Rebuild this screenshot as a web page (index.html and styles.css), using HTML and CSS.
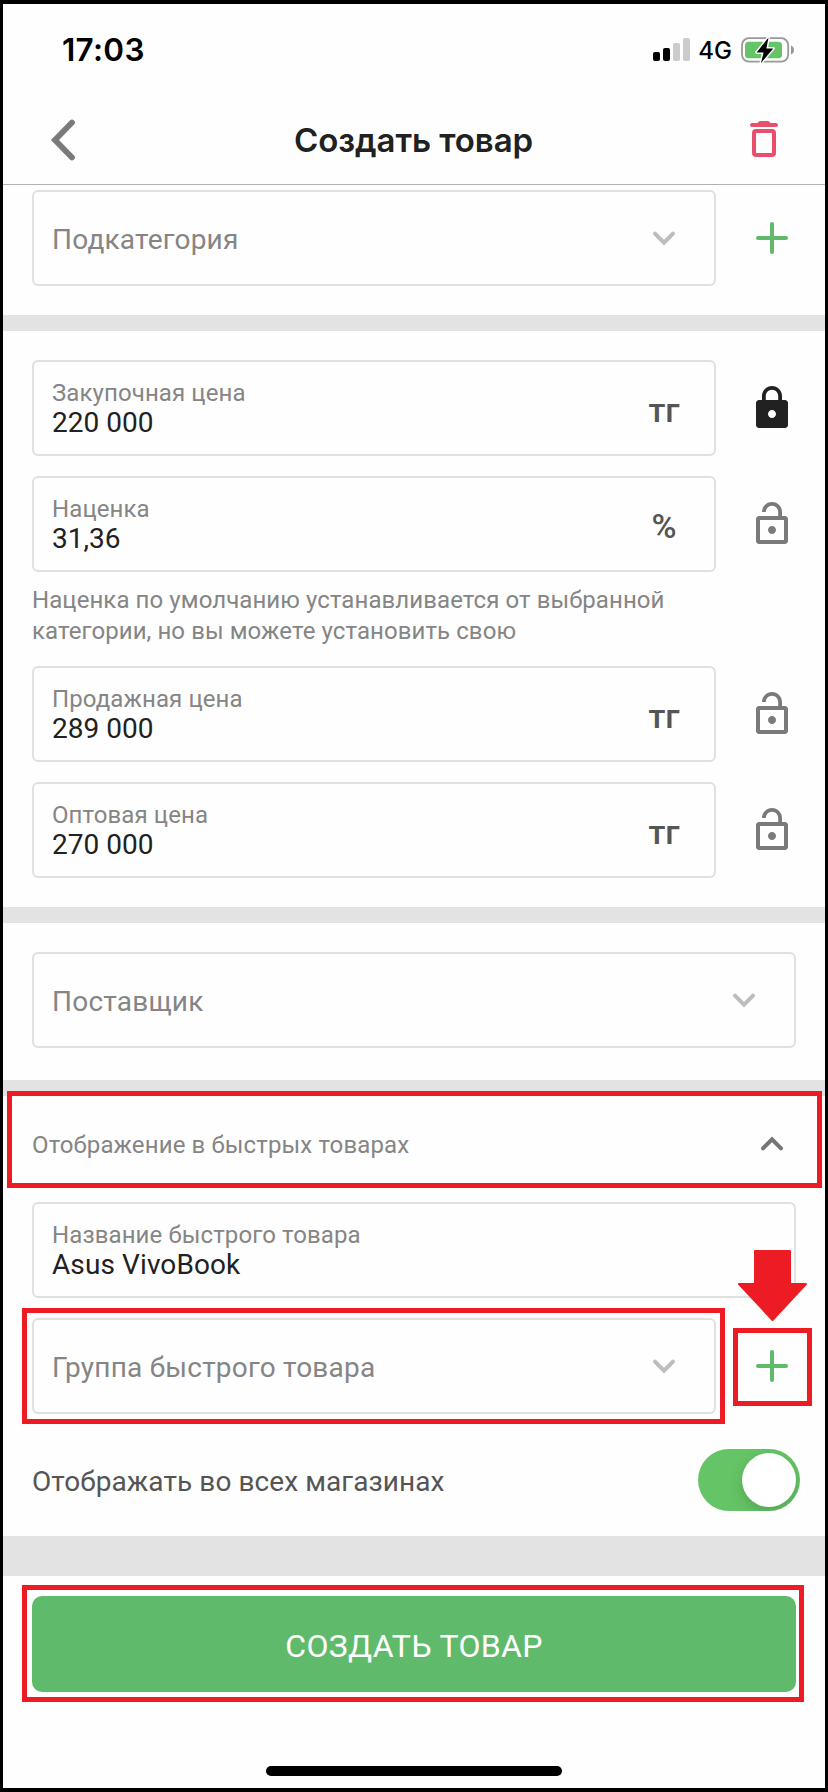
FILE: index.html
```
<!DOCTYPE html>
<html lang="ru">
<head>
<meta charset="utf-8">
<title>Создать товар</title>
<link rel="stylesheet" href="styles.css">
</head>
<body>
<svg width="0" height="0" class="defs">
  <symbol id="chevron" viewBox="0 0 24 24"><path d="M3 7.700l9 9 9-9" fill="none" stroke="currentColor" stroke-width="4" stroke-linecap="round"/></symbol>
  <symbol id="plus" viewBox="0 0 48 48"><path d="M24 10v28M10 24h28" fill="none" stroke="currentColor" stroke-width="4" stroke-linecap="round"/></symbol>
  <symbol id="lock" viewBox="0 0 24 24"><path fill="currentColor" d="M18.500 8H17V6c0-2.760-2.240-5-5-5S7 3.240 7 6v2H5.500C4.700 8 4 8.700 4 9.500v11c0 .8.700 1.500 1.500 1.500h13c.8 0 1.500-.7 1.500-1.500v-11c0-.8-.7-1.500-1.500-1.500zM12 17c-1.100 0-2-.9-2-2s.9-2 2-2 2 .9 2 2-.9 2-2 2zm3.100-9H8.900V6c0-1.710 1.390-3.100 3.100-3.100s3.100 1.390 3.100 3.100v2z"/></symbol>
  <symbol id="unlock" viewBox="0 0 24 24"><path fill="currentColor" fill-rule="evenodd" d="M12 17c1.100 0 2-.9 2-2s-.9-2-2-2-2 .9-2 2 .9 2 2 2zM18.500 8H17V6c0-2.760-2.240-5-5-5S7 3.240 7 6h1.900c0-1.710 1.390-3.100 3.100-3.100s3.100 1.390 3.100 3.100v2H5.500C4.700 8 4 8.700 4 9.500v11c0 .8.700 1.500 1.500 1.500h13c.8 0 1.500-.7 1.500-1.500v-11c0-.8-.7-1.500-1.500-1.500zM18 20H6V10h12v10z"/></symbol>
</svg>

<div class="screen">
  <div class="status-bar">
    <span class="clock">17:03</span>
    <div class="status-icons">
      <svg class="signal" width="37" height="23" viewBox="0 0 37 23">
        <rect x="0" y="14" width="7" height="9" rx="2"/>
        <rect x="10" y="10" width="7" height="13" rx="2"/>
        <rect x="20" y="5" width="7" height="18" rx="2" fill="#ccc"/>
        <rect x="30" y="0" width="7" height="23" rx="2" fill="#ccc"/>
      </svg>
      <span class="network">4G</span>
      <svg class="battery" width="54" height="28" viewBox="0 0 54 28">
        <rect x="1" y="2.200" width="46.200" height="23.400" rx="7" fill="none" stroke="#999" stroke-width="1.800"/>
        <rect x="4" y="5.700" width="37" height="16.500" rx="3.500" fill="#65c466"/>
        <path d="M50 9.400c1.900.7 3 2.400 3 4.500s-1.100 3.800-3 4.500z" fill="#999"/>
        <path d="M27.500 1.400L15.700 16.400h6.900L20 27 32.300 12.400h-6.900z" fill="#000" stroke="#fff" stroke-width="3" stroke-linejoin="round" paint-order="stroke"/>
      </svg>
    </div>
  </div>

  <header class="nav">
    <svg class="back" width="32" height="48" viewBox="0 0 32 48"><path d="M25 6.500L8 24l17 17.500" fill="none" stroke="currentColor" stroke-width="5.800" stroke-linecap="round"/></svg>
    <h1 class="nav-title">Создать товар</h1>
    <svg class="trash" width="32" height="40" viewBox="0 0 32 40">
      <path fill="currentColor" d="M4 4h5.500c1-1.500 2-2 3.500-2h6c1.500 0 2.500.5 3.500 2H28c2.600 0 2.600 4 0 4H4c-2.600 0-2.600-4 0-4z"/>
      <rect x="6" y="12" width="20" height="24" rx="2" fill="none" stroke="currentColor" stroke-width="4"/>
    </svg>
  </header>

  <section class="section section-category">
    <div class="row">
      <div class="field"><span class="placeholder">Подкатегория</span><span class="trail"><svg class="icon-sm"><use href="#chevron"/></svg></span></div>
      <svg class="icon green"><use href="#plus"/></svg>
    </div>
  </section>
  <div class="divider"></div>

  <section class="section section-prices">
    <div class="row">
      <div class="field"><div class="entry"><span class="label">Закупочная цена</span><span class="value">220 000</span></div><span class="trail unit">тг</span></div>
      <svg class="icon dark"><use href="#lock"/></svg>
    </div>
    <div class="row">
      <div class="field"><div class="entry"><span class="label">Наценка</span><span class="value">31,36</span></div><span class="trail unit">%</span></div>
      <svg class="icon"><use href="#unlock"/></svg>
    </div>
    <p class="hint">Наценка по умолчанию устанавливается от выбранной<br>категории, но вы можете установить свою</p>
    <div class="row">
      <div class="field"><div class="entry"><span class="label">Продажная цена</span><span class="value">289 000</span></div><span class="trail unit">тг</span></div>
      <svg class="icon"><use href="#unlock"/></svg>
    </div>
    <div class="row">
      <div class="field"><div class="entry"><span class="label">Оптовая цена</span><span class="value">270 000</span></div><span class="trail unit">тг</span></div>
      <svg class="icon"><use href="#unlock"/></svg>
    </div>
  </section>
  <div class="divider"></div>

  <section class="section section-supplier">
    <div class="field"><span class="placeholder">Поставщик</span><span class="trail"><svg class="icon-sm"><use href="#chevron"/></svg></span></div>
  </section>
  <div class="divider"></div>

  <section class="section section-quick">
    <div class="quick-head marked mark-head">
      <span class="quick-title">Отображение в быстрых товарах</span>
      <span class="head-icon"><svg class="icon-sm flip"><use href="#chevron"/></svg></span>
    </div>
    <div class="field"><div class="entry"><span class="label">Название быстрого товара</span><span class="value latin">Asus VivoBook</span></div></div>
    <div class="row">
      <div class="field marked mark-field"><span class="placeholder">Группа быстрого товара</span><span class="trail"><svg class="icon-sm"><use href="#chevron"/></svg></span></div>
      <div class="add marked mark-add">
        <svg class="icon green"><use href="#plus"/></svg>
        <svg class="arrow" width="70" height="72" viewBox="0 0 70 72"><path d="M17 1h35v33h16L34.500 70 1 34h16z" fill="#ed1c24" stroke="#ed1c24" stroke-width="2" stroke-linejoin="round"/></svg>
      </div>
    </div>
    <div class="switch-row">
      <span class="switch-label">Отображать во всех магазинах</span>
      <span class="switch"><span class="knob"></span></span>
    </div>
  </section>
  <div class="divider divider-tall"></div>

  <footer class="section footer">
    <div class="submit marked mark-submit">СОЗДАТЬ ТОВАР</div>
    <div class="home-indicator"></div>
  </footer>
</div>
</body>
</html>
```
FILE: styles.css
```
* { box-sizing: border-box; }
body { margin: 0; background: #fff; font-family: Roboto, "Noto Sans", sans-serif; }
svg { display: block; flex: none; }
.defs { position: absolute; }

.screen {
  display: flex;
  flex-direction: column;
  width: 828px;
  height: 1792px;
  border: solid #000;
  border-width: 4px 3px;
  background: #fefefe;
  overflow: hidden;
}

/* status bar */
.status-bar {
  display: flex;
  align-items: center;
  justify-content: space-between;
  height: 92px;
  padding: 0 30px 0 59px;
  font-family: Inter, sans-serif;
  color: #000;
}
.clock { padding-bottom: 2px; font-size: 31.500px; font-weight: 600; letter-spacing: .3px; }
.status-icons { display: flex; align-items: center; }
.signal { margin-bottom: 1px; }
.network { margin: 1px 9px 0 8px; font-size: 24px; font-weight: 500; }

/* navigation */
.nav {
  display: flex;
  align-items: center;
  justify-content: space-between;
  height: 89px;
  padding: 0 45px 0 44px;
  border-bottom: 1px solid #b2b2b2;
}
.nav-title {
  margin: 0;
  font: 600 33px Inter, sans-serif;
  letter-spacing: -.07px;
  color: #212121;
}
.back { margin-bottom: 1px; color: #7a7a7a; }
.trash { margin-bottom: 2px; color: #e84f6c; }

/* layout */
.section { display: flex; flex-direction: column; padding: 29px; }
.section-category { padding-top: 5px; }
.section-prices, .section-quick { gap: 20px; }
.section-supplier { padding-bottom: 32px; }
.section-quick { padding-top: 0; padding-bottom: 0; }
.divider { flex: none; height: 16px; background: #e3e3e3; }
.divider-tall { height: 40px; }
.row { display: flex; align-items: center; gap: 32px; }
.row .field { flex: 1; }

/* fields */
.field {
  display: flex;
  align-items: center;
  justify-content: space-between;
  height: 96px;
  padding-left: 18px;
  border: 2px solid #e0e0e0;
  border-radius: 6px;
}
.placeholder { padding-top: 3px; font-size: 28px; letter-spacing: .22px; color: #858585; }
.entry { display: flex; flex-direction: column; padding-top: 1px; }
.label { font-size: 24px; line-height: 28px; letter-spacing: .1px; color: #858585; }
.value { padding-top: 0; font-size: 28px; line-height: 32px; color: #212121; }
.latin { letter-spacing: .1px; }
.trail { display: flex; justify-content: center; width: 100px; color: #bdbdbd; }
.unit { padding-top: 3px; font-size: 34px; font-weight: 500; color: #555; }
.hint { margin: -7px 0 -1px; font-size: 24px; line-height: 31px; letter-spacing: .08px; color: #858585; }

/* icons */
.icon { width: 48px; height: 48px; color: #7a7a7a; }
.icon-sm { width: 24px; height: 24px; }
.green { color: #5fbb6b; }
.dark { color: #212121; }
.flip { transform: rotate(180deg); }

/* quick goods */
.quick-head {
  display: flex;
  align-items: center;
  justify-content: space-between;
  height: 96px;
  margin-bottom: -10px;
  font-size: 24px;
  letter-spacing: .12px;
  color: #858585;
}
.quick-title { padding-top: 2px; }
.head-icon { display: flex; justify-content: center; width: 48px; color: #757575; }
.switch-row {
  display: flex;
  align-items: center;
  justify-content: space-between;
  height: 122px;
  margin-top: -20px;
  padding-top: 10px;
  font-size: 28px;
  letter-spacing: .08px;
  color: #555;
}
.switch-label { padding-top: 2px; }
.switch {
  display: flex;
  justify-content: flex-end;
  width: 102px;
  height: 62px;
  margin-right: -4px;
  padding: 4px;
  border-radius: 31px;
  background: #65c466;
  overflow: hidden;
}
.knob { width: 54px; height: 54px; border-radius: 50%; background: #fff; box-shadow: 0 5px 14px rgba(0, 0, 0, .17); }

/* footer */
.footer { flex: 1; align-items: center; padding-top: 20px; padding-bottom: 12px; justify-content: space-between; }
.submit {
  display: flex;
  align-items: center;
  justify-content: center;
  align-self: stretch;
  height: 96px;
  padding-top: 3px;
  border-radius: 10px;
  background: #5fbb6b;
  font-size: 32px;
  letter-spacing: .3px;
  color: #fff;
}
.home-indicator { width: 296px; height: 10px; border-radius: 5px; background: #000; }

/* red callouts drawn over the form */
.marked { position: relative; }
.marked::after { content: ""; position: absolute; border: 5px solid #ed1c24; }
.mark-head::after { inset: -5px -26px 4px -25px; }
.mark-field::after { inset: -12px -11px -12px -12px; }
.mark-add::after { inset: -14px -16px -16px -15px; }
.mark-submit::after { inset: -11px -8px -10px -10px; }
.arrow { position: absolute; left: -10px; top: -92px; }
```
